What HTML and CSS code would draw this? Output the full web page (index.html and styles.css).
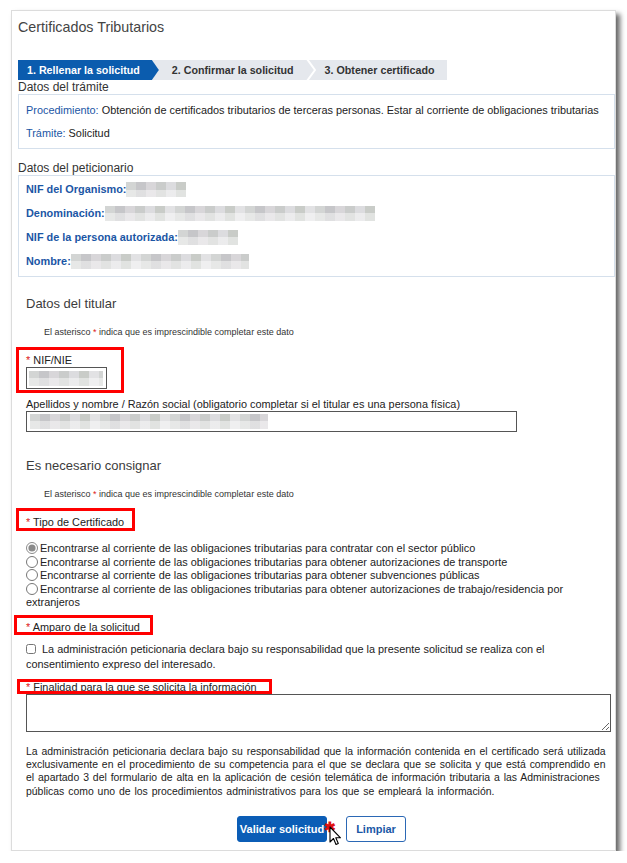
FILE: index.html
```html
<!DOCTYPE html>
<html lang="es">
<head>
  <meta charset="UTF-8" />
  <meta name="viewport" content="width=device-width, initial-scale=1.0" />
  <title>Certificados Tributarios</title>
  <link rel="stylesheet" href="styles.css">
</head>
<body>
  <div class="panel">
    <h1 class="title">Certificados Tributarios</h1>

    <div class="steps">
      <span class="step active">1. Rellenar la solicitud</span>
      <span class="step s2">2. Confirmar la solicitud</span>
      <svg class="sep" width="10" height="20" viewBox="0 0 10 20"><polyline points="1,-1 9,10 1,21" fill="none" stroke="#fff" stroke-width="2"/></svg>
      <span class="step s3">3. Obtener certificado</span>
    </div>

    <div class="legend">Datos del trámite</div>
    <div class="box">
      <p><span class="lbl">Procedimiento:</span> Obtención de certificados tributarios de terceras personas. Estar al corriente de obligaciones tributarias</p>
      <p><span class="lbl">Trámite:</span> Solicitud</p>
    </div>

    <div class="legend gap">Datos del peticionario</div>
    <div class="box pet">
      <p><b class="lbl">NIF del Organismo:</b><span class="blur w60"></span></p>
      <p><b class="lbl">Denominación:</b><span class="blur w270"></span></p>
      <p><b class="lbl">NIF de la persona autorizada:</b><span class="blur w60"></span></p>
      <p><b class="lbl">Nombre:</b><span class="blur w178"></span></p>
    </div>

    <div class="form">
      <h2 class="sect">Datos del titular</h2>
      <p class="note">El asterisco <span class="req">*</span> indica que es imprescindible completar este dato</p>

      <div class="field nif mark">
        <label><span class="req">*</span> NIF/NIE</label>
        <div class="input short"><span class="blur w74"></span></div>
      </div>

      <div class="field ape">
        <label>Apellidos y nombre / Razón social (obligatorio completar si el titular es una persona física)</label>
        <div class="input long"><span class="blur w238"></span></div>
      </div>

      <h2 class="sect second">Es necesario consignar</h2>
      <p class="note">El asterisco <span class="req">*</span> indica que es imprescindible completar este dato</p>

      <div class="tag tipo mark"><span class="req">*</span> Tipo de Certificado</div>

      <div class="options">
        <label><input type="radio" name="tipo" checked> Encontrarse al corriente de las obligaciones tributarias para contratar con el sector público</label>
        <label><input type="radio" name="tipo"> Encontrarse al corriente de las obligaciones tributarias para obtener autorizaciones de transporte</label>
        <label><input type="radio" name="tipo"> Encontrarse al corriente de las obligaciones tributarias para obtener subvenciones públicas</label>
        <label><input type="radio" name="tipo"> Encontrarse al corriente de las obligaciones tributarias para obtener autorizaciones de trabajo/residencia por extranjeros</label>
      </div>

      <div class="tag amparo mark"><span class="req">*</span> Amparo de la solicitud</div>
      <label class="check"><input type="checkbox"> La administración peticionaria declara bajo su responsabilidad que la presente solicitud se realiza con el consentimiento expreso del interesado.</label>

      <div class="tag finalidad mark"><span class="req">*</span> Finalidad para la que se solicita la información</div>
      <textarea class="area"></textarea>

      <p class="decl">La administración peticionaria declara bajo su responsabilidad que la información contenida en el certificado será utilizada exclusivamente en el procedimiento de su competencia para el que se declara que se solicita y que está comprendido en el apartado 3 del formulario de alta en la aplicación de cesión telemática de información tributaria a las Administraciones públicas como uno de los procedimientos administrativos para los que se empleará la información.</p>

      <div class="actions">
        <button class="btn primary">Validar solicitud
          <span class="star">✱</span>
          <svg class="cursor" width="13" height="21" viewBox="0 0 13 21"><path d="M1 1 L1 16 L4.5 12.5 L7 18.5 L9.3 17.5 L6.8 11.8 L11.5 11.8 Z" fill="#fff" stroke="#000" stroke-width="1.1" stroke-linejoin="round"/></svg>
        </button>
        <button class="btn ghost">Limpiar</button>
      </div>
    </div>
  </div>
</body>
</html>
```

FILE: styles.css
```css
* { box-sizing: border-box; }
body {
  margin: 0;
  background: #fff;
  font-family: "Liberation Sans", Arial, sans-serif;
  font-size: 10.9px;
  color: #222;
}
p { margin: 0; }

.panel {
  margin: 10px 0 0 11px;
  width: 605px;
  height: 841px;
  border: 1px solid #dcdcdc;
  background: #fff;
  box-shadow: 4px 4px 5px rgba(0,0,0,0.6);
  padding: 8px 0 0 6px;
}
.title {
  margin: 0;
  font-size: 14.3px;
  line-height: 16px;
  font-weight: normal;
  color: #444;
}

/* pasos */
.steps {
  display: flex;
  width: fit-content;
  height: 20px;
  margin-top: 25px;
  background: #e5e8ed;
}
.step {
  line-height: 20px;
  font-size: 10.7px;
  font-weight: bold;
  color: #333;
  white-space: nowrap;
}
.step.active {
  background: #0b5cae;
  color: #fff;
  padding: 0 19px 0 9px;
  clip-path: polygon(0 0, calc(100% - 7px) 0, 100% 50%, calc(100% - 7px) 100%, 0 100%);
}
.step.s2 { padding: 0 12px 0 13px; }
.step.s3 { padding: 0 12px 0 9px; }
.sep { display: block; }

/* bloques de datos */
.legend {
  font-size: 12px;
  line-height: 14px;
  color: #333;
}
.legend.gap { margin-top: 12px; }
.box {
  border: 1px solid #d5e0ec;
  padding: 8px 8px 8px 7px;
}
.box p { line-height: 14px; }
.box p + p { margin-top: 9px; }
.box.pet { padding: 6px 8px 7px 7px; }
.box.pet p { line-height: 15px; display: flex; align-items: center; }
.lbl { color: #1b56a5; }
b.lbl { font-weight: bold; }

.blur {
  display: inline-block;
  height: 15px;
  vertical-align: middle;
  background:
    linear-gradient(rgba(255,255,255,0) 50%, rgba(255,255,255,0.45) 50%),
    repeating-linear-gradient(90deg, #d3d5d4 0 10px, #c6c6c9 10px 20px, #d8d6d9 20px 30px, #cacccb 30px 40px, #dcdcdf 40px 50px, #c9ccc8 50px 60px, #e2e2e4 60px 70px);
}
.w60 { width: 60px; }
.w74 { width: 74px; }
.w178 { width: 178px; }
.w238 { width: 238px; }
.w270 { width: 270px; }

/* formulario */
.form { padding: 0 2px 0 8px; }
.sect {
  margin: 19px 0 0;
  font-size: 13px;
  line-height: 16px;
  font-weight: normal;
  color: #3c3c3c;
}
.sect.second { margin-top: 26px; }
.note {
  margin-top: 15px;
  padding-left: 18px;
  font-size: 9px;
  line-height: 11px;
  color: #333;
}
.req { color: #d22; }

.mark { position: relative; }
.mark::after {
  content: "";
  position: absolute;
  border: 3px solid #f00;
  pointer-events: none;
}

.field label { display: block; line-height: 14px; }
.field.nif { width: 81px; margin-top: 15px; }
.field.nif::after { top: -6px; left: -10px; right: -17px; bottom: -4px; }
.field.ape { margin-top: 9px; }
.field.ape label { line-height: 13px; }

.input {
  border: 1px solid #555;
  background: #fff;
  display: flex;
  align-items: center;
  padding-left: 2px;
}
.input.short { width: 81px; height: 22px; }
.input.long { width: 491px; height: 21px; padding-left: 3px; }

.tag {
  width: fit-content;
  line-height: 14px;
}
.tag.tipo { margin-top: 15px; }
.tag.tipo::after { top: -7px; left: -10px; right: -11px; bottom: -2px; }
.tag.amparo { margin-top: 10px; }
.tag.amparo::after { top: -5px; left: -12px; right: -13px; bottom: -1px; }
.tag.finalidad { margin-top: 8px; z-index: 1; }
.tag.finalidad::after { top: -1px; left: -9px; right: -15px; bottom: 0; }

.options { margin-top: 13px; }
.options label { display: block; line-height: 13.5px; }
.options input {
  width: 12px;
  height: 12px;
  margin: 0 -1px 0 0;
  vertical-align: -2px;
  accent-color: #8a8a8a;
}

.check {
  display: block;
  margin-top: 8px;
  line-height: 15px;
}
.check input {
  width: 10px;
  height: 10px;
  margin: 0 3px 0 0;
  vertical-align: -1px;
}

.area {
  display: block;
  width: 585px;
  height: 38px;
  border: 1px solid #555;
  resize: vertical;
  margin: 0;
}

.decl {
  margin-top: 13px;
  font-size: 10.45px;
  word-spacing: 1px;
  line-height: 13.4px;
}

.actions {
  display: flex;
  justify-content: center;
  gap: 19px;
  margin-top: 18px;
  padding-left: 4px;
}
.btn {
  position: relative;
  height: 26px;
  border-radius: 3px;
  font-family: inherit;
  font-size: 11px;
  font-weight: bold;
  padding: 0;
}
.btn.primary {
  width: 90px;
  background: #0b5db6;
  border: 1px solid #0b5db6;
  color: #fff;
}
.btn.ghost {
  width: 60px;
  background: #fff;
  border: 1px solid #2b68b5;
  color: #1a58a6;
}
.star {
  position: absolute;
  left: 86px;
  top: 3px;
  color: #e01010;
  font-size: 14px;
  line-height: 14px;
}
.cursor {
  position: absolute;
  left: 91px;
  top: 9px;
}
```
